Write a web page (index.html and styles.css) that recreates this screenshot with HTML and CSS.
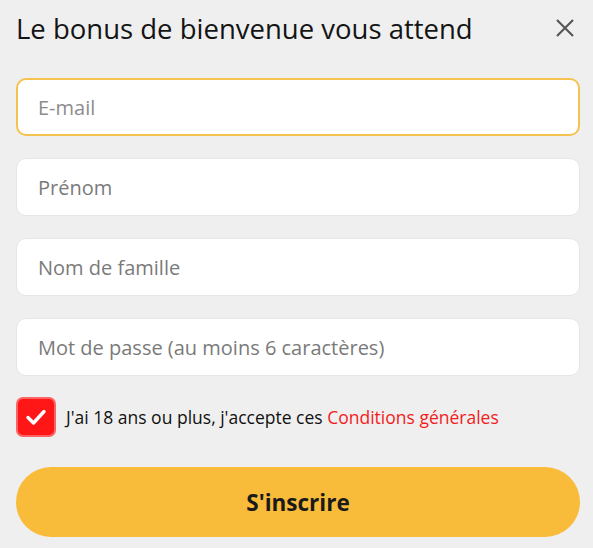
FILE: index.html
```html
<!DOCTYPE html>
<html lang="fr">
<head>
  <meta charset="UTF-8">
  <title>Inscription</title>
  <link rel="stylesheet" href="styles.css">
</head>
<body>
  <div class="modal">
    <div class="modal-header">
      <h2>Le bonus de bienvenue vous attend</h2>
      <button class="close-btn" type="button" aria-label="Fermer">
        <svg width="18" height="18" viewBox="0 0 18 18">
          <path d="M1 1 L17 17 M17 1 L1 17" stroke="#555" stroke-width="2.1" fill="none"/>
        </svg>
      </button>
    </div>

    <form class="signup-form">
      <input type="email" class="field active" placeholder="E-mail" autofocus>
      <input type="text" class="field" placeholder="Prénom">
      <input type="text" class="field" placeholder="Nom de famille">
      <input type="password" class="field" placeholder="Mot de passe (au moins 6 caractères)">

      <label class="agree">
        <span class="check">
          <svg width="22" height="22" viewBox="0 0 22 22">
            <path d="M3 11.5 L8.5 17 L19 5.5" stroke="#fff" stroke-width="3.4" fill="none" stroke-linecap="round" stroke-linejoin="round"/>
          </svg>
        </span>
        <span class="agree-text">J'ai 18 ans ou plus, j'accepte ces <a href="#">Conditions générales</a></span>
      </label>

      <button type="submit" class="submit-btn">S'inscrire</button>
    </form>
  </div>
</body>
</html>
```

FILE: styles.css
```css
* {
  box-sizing: border-box;
}

body {
  margin: 0;
  background: #efefef;
  font-family: 'Open Sans', 'Noto Sans', sans-serif;
  color: #111;
}

.modal {
  padding: 10px 13px 11px 16px;
}

.modal-header {
  display: flex;
  justify-content: space-between;
  align-items: center;
  height: 36px;
  margin-bottom: 32px;
}

.modal-header h2 {
  margin: 0;
  font-size: 27.5px;
  font-weight: 400;
  color: #141414;
}

.close-btn {
  border: none;
  background: none;
  padding: 0;
  margin-right: 3px;
  width: 24px;
  height: 24px;
  display: flex;
  align-items: center;
  justify-content: center;
  cursor: pointer;
}

.signup-form {
  display: flex;
  flex-direction: column;
  width: 564px;
}

.field {
  height: 58px;
  margin-bottom: 22px;
  border: 1px solid #e6e6e6;
  border-radius: 10px;
  background: #fff;
  padding: 0 21px;
  font-family: inherit;
  font-size: 20px;
  color: #333;
  outline: none;
}

.field.active {
  border: 2px solid #f5c24f;
  padding: 0 20px;
}

.field::placeholder {
  color: #7a7a7a;
}

.field.active::placeholder {
  color: #8c8c8c;
}

.agree {
  display: flex;
  align-items: center;
  gap: 10px;
  margin-top: -1px;
  margin-bottom: 30px;
}

.check {
  width: 40px;
  height: 40px;
  border-radius: 7px;
  background: #ff1616;
  border: 2px solid #ff6464;
  display: flex;
  align-items: center;
  justify-content: center;
  flex-shrink: 0;
}

.agree-text {
  font-size: 17.5px;
  color: #111;
}

.agree-text a {
  color: #f21d1d;
  text-decoration: none;
}

.submit-btn {
  height: 70px;
  border: none;
  border-radius: 35px;
  background: #f9bc3a;
  font-family: inherit;
  font-size: 22.5px;
  font-weight: 700;
  color: #1a1a1a;
  cursor: pointer;
}
```
